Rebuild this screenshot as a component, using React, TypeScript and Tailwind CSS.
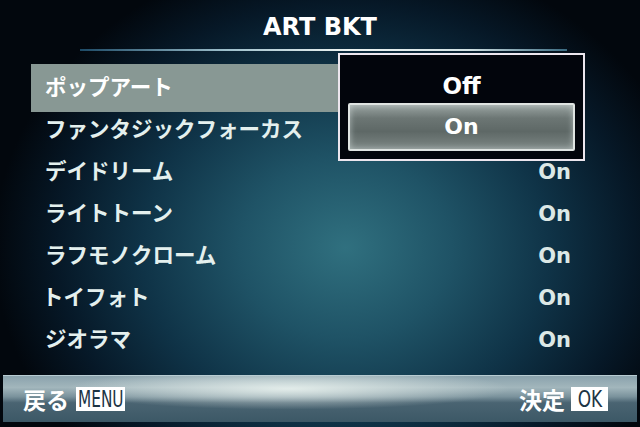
const items = [
  "ポップアート",
  "ファンタジックフォーカス",
  "デイドリーム",
  "ライトトーン",
  "ラフモノクローム",
  "トイフォト",
  "ジオラマ",
];

const jp = "font-['Noto_Sans_CJK_JP',sans-serif]";
const latin = "font-['DejaVu_Sans','Noto_Sans_CJK_JP',sans-serif]";

function Row({ label, index }: { label: string; index: number }) {
  const active = index === 0;
  return (
    <div
      className={
        active
          ? "-my-[3px] flex h-[48px] items-center justify-between bg-[#889894] pl-[14px] pr-[13px]"
          : "flex h-[42px] items-center justify-between pl-[14px] pr-[13px]"
      }
    >
      <span
        className={`${jp} pb-[4px] text-[21.5px] font-bold leading-none ${
          active ? "text-white" : "text-[#e4f0ee]"
        } ${label === "トイフォト" ? "-ml-[3px]" : ""}`}
      >
        {label}
      </span>
      <span className={`${latin} text-[21px] font-bold leading-none text-[#dce8e6]`}>On</span>
    </div>
  );
}

export default function App() {
  return (
    <div className="relative flex h-[427px] w-[640px] flex-col overflow-hidden bg-[radial-gradient(ellipse_55%_70%_at_54%_58%,#30707f_0%,#1f5366_30%,#0f3347_58%,#061827_82%,#02070d_100%)]">
      {/* title */}
      <div className="pt-[15px] text-center">
        <span className={`${latin} text-[24px] font-bold leading-[24px] text-white`}>ART BKT</span>
      </div>
      <div className="ml-[80px] mt-[8px] h-[2px] w-[487px] bg-[linear-gradient(to_right,#1d4a66,#9ec0cc_30%,#eef4f2_55%,#d0e0e2_80%,#3a6a80)]" />

      {/* filter list */}
      <div className="ml-[31px] mt-[16px] w-[553px]">
        {items.map((label, i) => (
          <Row key={label} label={label} index={i} />
        ))}
      </div>

      {/* bottom guide bar */}
      <div className="mx-[3px] mb-[5px] mt-auto flex h-[47px] items-center justify-between border-t border-[#b8ccd2] bg-[radial-gradient(ellipse_35%_45%_at_45%_28%,rgba(238,246,242,0.85),rgba(238,246,242,0)_100%),linear-gradient(to_bottom,#8aa2ac_0%,#a2b6bc_25%,#7a929c_45%,#4a6472_58%,#3c5866_100%)] pl-[20px] pr-[29px]">
        <div className="flex items-center gap-[7px]">
          <span className={`${jp} text-[23px] font-bold leading-none text-white`}>戻る</span>
          <span className="flex h-[24px] w-[49px] items-center justify-center bg-white">
            <span className="inline-block scale-x-[0.74] font-['DejaVu_Sans_Condensed','DejaVu_Sans',sans-serif] text-[23px] leading-none text-[#1c3444]">
              MENU
            </span>
          </span>
        </div>
        <div className="flex items-center gap-[6px]">
          <span className={`${jp} text-[23px] font-bold leading-none text-white`}>決定</span>
          <span className="flex h-[24px] w-[37px] items-center justify-center bg-white">
            <span className="inline-block scale-x-[0.82] font-['DejaVu_Sans_Condensed','DejaVu_Sans',sans-serif] text-[23px] leading-none text-[#1c3444]">
              OK
            </span>
          </span>
        </div>
      </div>

      {/* option popup */}
      <div className="absolute left-[338px] top-[53px] flex w-[247px] flex-col border-2 border-[#ece6ee] bg-[#02050c] pb-[8px]">
        <div className="flex h-[48px] items-center justify-center pt-[14px]">
          <span className={`${latin} text-[23px] font-bold leading-none text-white`}>Off</span>
        </div>
        <div className="mx-[8px] flex h-[48px] items-center justify-center rounded-[2px] border-2 border-[#dfe4e2] bg-[linear-gradient(to_bottom,#9aa4a2_0%,#6c7674_30%,#5e6866_60%,#7c8684_100%)] shadow-[inset_0_0_6px_rgba(220,230,228,0.6)]">
          <span className={`${latin} text-[22px] font-bold leading-none text-white`}>On</span>
        </div>
      </div>
    </div>
  );
}
